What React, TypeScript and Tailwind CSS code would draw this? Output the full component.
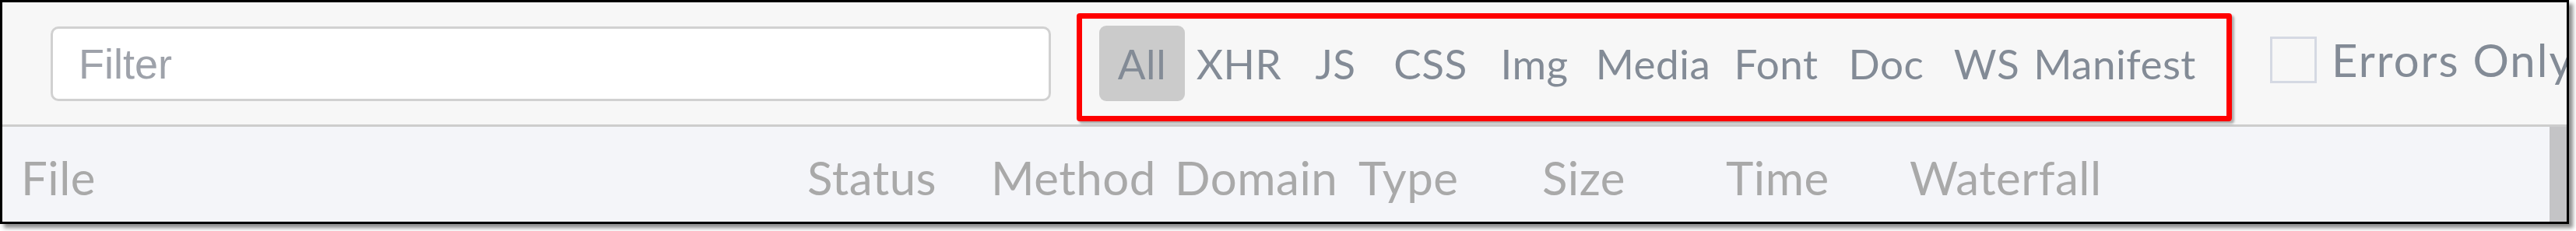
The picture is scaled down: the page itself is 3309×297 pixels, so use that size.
import React from "react";

const filters = [
  { label: "All", w: "w-[110px]", active: true },
  { label: "XHR", w: "w-[139px]" },
  { label: "JS", w: "w-[109px]" },
  { label: "CSS", w: "w-[135px]" },
  { label: "Img", w: "w-[132px]" },
  { label: "Media", w: "w-[173px]" },
  { label: "Font", w: "w-[143px]" },
  { label: "Doc", w: "w-[140px]" },
  { label: "WS", w: "w-[118px]" },
  { label: "Manifest", w: "w-[211px]" },
];

const columns = ["Status", "Method", "Domain", "Type", "Size", "Time"];

const FilterTab = ({
  label,
  w,
  active,
}: {
  label: string;
  w: string;
  active?: boolean;
}) => (
  <button
    className={`flex h-[97px] shrink-0 items-center justify-center rounded-[9px] text-[53px] leading-none tracking-[0.5px] text-[#838b96] ${w} ${
      active ? "bg-[#cbcbcb] text-[#7d8593]" : ""
    }`}
  >
    {label}
  </button>
);

export default function App() {
  return (
    <div className="h-[297px] w-[3309px] overflow-hidden bg-white font-['Lato',sans-serif]">
      <div className="flex h-[288px] w-[3300px] flex-col overflow-hidden border-[3px] border-black bg-[#f7f7f7] shadow-[5px_5px_5px_rgba(0,0,0,0.45)]">
        {/* toolbar */}
        <div className="relative flex h-[160px] shrink-0 items-center border-b-[3px] border-[#cdcdcd] bg-[#f7f7f7] pl-[62px]">
          <input
            placeholder="Filter"
            className="h-[96px] w-[1285px] shrink-0 rounded-[10px] border-[3px] border-[#d1d1d1] bg-white pl-[33px] font-['Liberation_Sans',Arial,sans-serif] text-[54px] outline-none placeholder:text-[#9ea2aa]"
          />
          <div className="ml-[62px] flex items-center">
            {filters.map((f) => (
              <FilterTab key={f.label} {...f} />
            ))}
          </div>
          <label className="mb-[10px] ml-[94px] flex shrink-0 items-center whitespace-nowrap">
            <span className="block h-[60px] w-[60px] border-[3px] border-[#d5d9e3] bg-[#f7f7f7]" />
            <span className="ml-[19px] text-[58px] leading-none tracking-[2px] text-[#838b96]">
              Errors Only
            </span>
          </label>

          {/* annotation */}
          <div className="pointer-events-none absolute left-[1380px] top-[14px] h-[139px] w-[1484px] rounded-[4px] border-[7px] border-[#ff0000] shadow-[3px_3px_3px_rgba(0,0,0,0.3)]" />
        </div>

        {/* table header */}
        <div className="flex flex-1 bg-[#f4f5f9]">
          <div className="flex flex-1 items-center pt-[8px] text-[60px] leading-none tracking-[0.5px] text-[#a9a9a9]">
            <div className="w-[1034px] shrink-0 pl-[24px]">File</div>
            {columns.map((c) => (
              <div key={c} className="w-[236px] shrink-0">
                {c}
              </div>
            ))}
            <div className="flex-1">Waterfall</div>
          </div>
          <div className="w-[22px] shrink-0 bg-[#c4c4c6]" />
        </div>
      </div>
    </div>
  );
}
